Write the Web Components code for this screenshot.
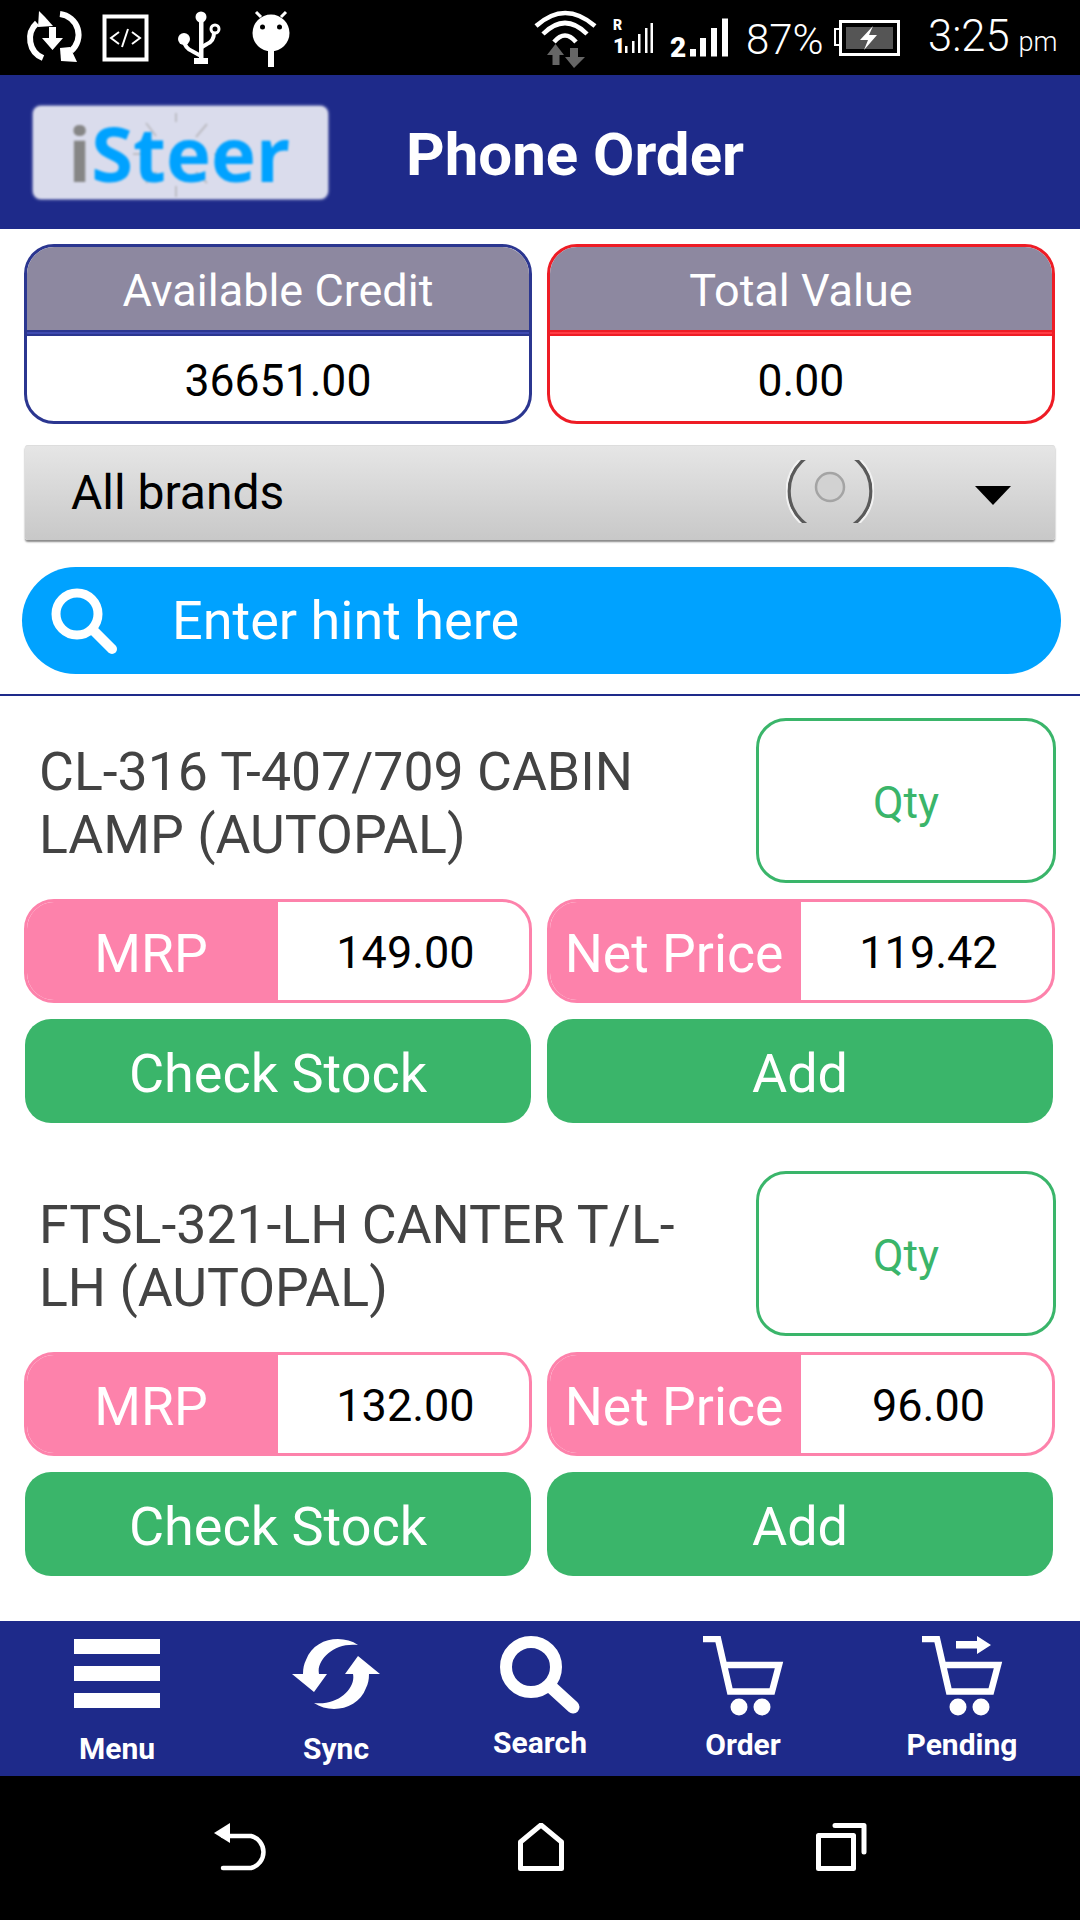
<!DOCTYPE html>
<html><head><meta charset="utf-8"><title>Phone Order</title>
<style>
html,body{margin:0;padding:0;background:#fff;font-family:Roboto,"Liberation Sans",sans-serif}
</style></head><body>
<phone-app></phone-app>
<script>
function def(name, html){
  customElements.define(name, class extends HTMLElement{
    constructor(){super();this.attachShadow({mode:'open'});}
    connectedCallback(){
      this.shadowRoot.innerHTML=typeof html==='function'?html(this):html;
    }
  });
}
const F='Roboto,"Liberation Sans",sans-serif';

def('status-bar',`<style>
:host{display:flex;height:75px;background:#000;color:#fff;align-items:center;font-family:${F};box-sizing:border-box;flex:none}
svg{display:block;flex:none;overflow:visible}
.l{display:flex;align-items:center;margin-left:27px}
.r{display:flex;align-items:center;margin-left:auto;margin-right:25px}
.t{font-weight:300;font-size:42px;line-height:75px;white-space:nowrap;padding-top:3px;box-sizing:border-box;flex:none}
.pm{font-size:27px;font-weight:300;margin-left:9px}
</style>
<div class="l">
<svg width="53" height="54" viewBox="0 0 53 54" fill="none"><path d="M10 12A21 21 0 0 0 16 47" stroke="#fff" stroke-width="6"/><path d="M18 6 L12 0 L11 16 L26 15Z" fill="#fff"/><path d="M33 3A21 21 0 0 1 44 40" stroke="#fff" stroke-width="6"/><path d="M34 50L50 51L43 36L33 37Z" fill="#fff"/><path d="M22 16h7v11h7L25.500 39 15 27h7z" fill="#fff"/></svg>
<svg style="margin-left:22px" width="47" height="48" viewBox="0 0 47 48" fill="none"><rect x="2.500" y="2.500" width="42" height="43" stroke="#fff" stroke-width="4"/><path d="M17 18l-8 6 8 6M30 18l8 6-8 6M26 15l-6 18" stroke="#fff" stroke-width="2"/></svg>
<svg style="margin-left:28px" width="50" height="56" viewBox="0 0 50 56" fill="#fff"><circle cx="24" cy="7" r="5.500"/><rect x="22" y="8" width="4.500" height="42"/><rect x="17" y="48" width="14" height="6"/><circle cx="7" cy="29" r="6"/><path d="M7 31q1 7 8 10l9 5" stroke="#fff" stroke-width="4" fill="none"/><circle cx="38" cy="19" r="4" fill="none" stroke="#fff" stroke-width="3"/><path d="M37 23q0 8-7 11l-5 3" stroke="#fff" stroke-width="4" fill="none"/></svg>
<svg style="margin-left:25px" width="38" height="58" viewBox="0 0 38 58" fill="#fff"><circle cx="19" cy="24" r="18.500"/><path d="M9 8L4 3M29 8l5-5" stroke="#fff" stroke-width="3"/><rect x="16" y="42" width="6" height="16"/><circle cx="10.500" cy="18" r="2.500" fill="#000"/><circle cx="27.500" cy="18" r="2.500" fill="#000"/></svg>
</div>
<div class="r">
<svg width="62" height="62" viewBox="0 0 62 62" fill="none"><path d="M2 19Q31-7 61 19M9 27Q31 5 53 27M20 35Q31 22 42 35" stroke="#fff" stroke-width="4.500"/><path d="M18.500 58V48H13L21.500 37 30 48H25.500V58Z" fill="#666"/><path d="M36 41H44V50H51L40 61 31 50H36Z" fill="#666"/></svg>
<svg style="margin-left:16px" width="41" height="46" viewBox="0 0 41 46" fill="#fff"><text x="1" y="15" font-family="Roboto" font-size="14" font-weight="900">R</text><text x="1" y="38" font-family="Roboto" font-size="21" font-weight="900">1</text><rect x="13" y="31" width="2.500" height="7"/><rect x="20" y="26" width="2.500" height="12"/><rect x="26" y="19" width="2.500" height="19"/><rect x="33" y="13" width="2.500" height="25"/><rect x="38.500" y="8" width="2.500" height="30"/></svg>
<svg style="margin-left:17px" width="58" height="54" viewBox="0 0 58 54" fill="#fff"><text x="0" y="45.500" font-family="Roboto" font-size="28" font-weight="900">2</text><rect x="20" y="38" width="6" height="7.500"/><rect x="30" y="27" width="6" height="18.500"/><rect x="41" y="17" width="6" height="28.500"/><rect x="52" y="7.500" width="6" height="38"/></svg>
<span class="t" style="margin-left:18px;width:75px">87%</span>
<svg style="margin-left:13px" width="66" height="36" viewBox="0 0 66 36" fill="none"><path d="M6 9H1v16h5" stroke="#fff" stroke-width="2"/><rect x="6.500" y="1.500" width="58" height="33" stroke="#fff" stroke-width="3"/><rect x="12" y="7" width="47" height="22" fill="#555"/><path d="M39 6L26 20h8l-4 10 13-15h-8z" fill="#fff"/></svg>
<span class="t" style="margin-left:28px;width:127px;font-size:43.500px">3:25<span class="pm">pm</span></span>
</div>`);

def('app-header',`<style>
:host{display:flex;height:154px;background:#1e2a8a;align-items:center;font-family:${F};flex:none}
.logo{margin-left:33px;width:295px;height:93px;background:#dadcec;border-radius:8px;box-shadow:0 0 3px #dadcec;position:relative;display:flex;align-items:center;filter:blur(1px);flex:none;box-sizing:border-box;padding-left:35px;font:700 76px/93px "Open Sans",sans-serif}
.logo svg{position:absolute;left:0;top:0}
.i{color:#868686;position:relative}.s{color:#00a2ff;position:relative}
h1{margin:0 0 0 78px;padding-top:6px;color:#fff;font:700 60px/1 ${F};white-space:nowrap}
</style>
<div class="logo"><svg width="295" height="93" viewBox="0 0 295 93" stroke="#bdbdc4" stroke-width="2" fill="none"><path d="M143 7V16M143 80V91M100 48H110M181 48H191M113 17L123 30M174 18L163 31M113 77L123 66M174 77L163 66"/></svg><span class="i">i</span><span class="s">Steer</span></div>
<h1><slot></slot></h1>`);

def('info-box',(h)=>{const c=h.getAttribute('color');const m=h.getAttribute('mid');return `<style>
:host{display:block;flex:none;width:508px;height:180px;box-sizing:border-box;border:3px solid ${c};border-radius:30px;overflow:hidden;font-family:${F}}
.h{height:83px;box-sizing:border-box;padding-top:3px;background:#8d88a0;color:#fff;font-size:45px;display:flex;align-items:center;justify-content:center}
.d{height:2px;border-top:2px solid ${c};border-bottom:2px solid ${c};background:${m}}
.v{display:flex;align-items:center;justify-content:center;height:85px;font-size:44.500px;color:#000;padding-top:4px;box-sizing:border-box}
</style><div class="h">${h.getAttribute('label')||''}</div><div class="d"></div><div class="v">${h.getAttribute('value')||''}</div>`});

def('brand-spinner',`<style>
:host{display:flex;align-items:center;box-sizing:border-box;width:1030px;height:95px;margin:21px 0 0 25px;flex:none;border-radius:3px;background:linear-gradient(#e6e6e6,#c8c8c8);box-shadow:0 2px 2px #888,inset 0 1px 0 #ddd;position:relative;font:400 48px/1 ${F};color:#000;padding-left:46px}
.ring{position:absolute;left:761px;top:15px;width:88px;height:63px;overflow:hidden}
.ring svg{position:absolute;left:0;top:-14px}
.tri{position:absolute;left:950px;top:41px;width:0;height:0;border-left:18px solid transparent;border-right:18px solid transparent;border-top:19px solid #000}
</style><slot></slot>
<div class="ring"><svg width="88" height="90" viewBox="0 0 88 90" fill="none"><circle cx="44" cy="45" r="41" stroke="#5a5a5a" stroke-width="3.500"/><circle cx="44" cy="45" r="43.500" stroke="#f2f2f2" stroke-width="2"/><circle cx="44" cy="41" r="14" fill="#d2d2d2" stroke="#a4a4a4" stroke-width="2.500"/></svg></div>
<div class="tri"></div>`);

def('search-bar',`<style>
:host{display:flex;align-items:center;box-sizing:border-box;width:1039px;height:107px;margin:27px 0 0 22px;flex:none;border-radius:54px;background:#00a2ff;color:#fff;font:400 54px/1 ${F};padding-left:29px}
svg{flex:none;margin-right:55px}
.t{padding-top:1px}
</style><svg width="66" height="66" viewBox="0 0 66 66" fill="none"><circle cx="26" cy="26" r="21" stroke="#fff" stroke-width="9"/><path d="M42 42L61 61" stroke="#fff" stroke-width="10" stroke-linecap="round"/></svg><span class="t"><slot></slot></span>`);

def('price-pill',(h)=>`<style>
:host{display:flex;box-sizing:border-box;flex:none;width:508px;height:104px;border:3px solid #fd82ab;border-radius:30px;overflow:hidden;font-family:${F}}
.a{width:251px;background:#fd82ab;color:#fff;font-size:53.500px;display:flex;align-items:center;justify-content:center;white-space:nowrap;flex:none;padding:5px 3px 0 0;box-sizing:border-box}
.b{flex:1;display:flex;align-items:center;justify-content:center;color:#000;font-size:45px;padding:3px 0 0 4px}
</style><div class="a">${h.getAttribute('label')}</div><div class="b">${h.getAttribute('value')}</div>`);

def('action-button',`<style>
:host{display:flex;box-sizing:border-box;flex:none;width:506px;height:104px;background:#3ab56a;border-radius:26px;color:#fff;font:400 54px/1 ${F};align-items:center;justify-content:center;padding-top:6px}
</style><slot></slot>`);

def('product-item',(h)=>`<style>
:host{display:block;box-sizing:border-box;height:453px;padding-top:22px;font-family:${F};flex:none}
.top{display:flex;height:165px;align-items:center;padding:0 24px 0 39px;justify-content:space-between}
.n{width:660px;font-size:53.600px;line-height:63px;color:#434343;margin-top:5px}
.q{width:300px;height:165px;box-sizing:border-box;border:3px solid #3ab56a;border-radius:30px;display:flex;align-items:center;justify-content:center;color:#3ab56a;font-size:44.500px;flex:none;padding-top:4px}
.row{display:flex;gap:15px;margin:16px 0 0 24px}
.row.b{gap:16px;margin-left:25px}
</style>
<div class="top"><div class="n">${h.getAttribute('name')}</div><div class="q">Qty</div></div>
<div class="row"><price-pill label="MRP" value="${h.getAttribute('mrp')}"></price-pill><price-pill label="Net Price" value="${h.getAttribute('net')}"></price-pill></div>
<div class="row b"><action-button>Check Stock</action-button><action-button>Add</action-button></div>`);

def('nav-item',(h)=>`<style>
:host{display:flex;flex-direction:column;align-items:center;color:#fff;font:700 30px/34px ${F};box-sizing:border-box;height:155px;padding-top:${h.getAttribute('top')}px}
.l{margin-top:${h.getAttribute('shift')||0}px;white-space:nowrap}
::slotted(svg){display:block}
</style><slot></slot><div class="l">${h.getAttribute('label')}</div>`);

def('bottom-nav',`<style>
:host{display:grid;grid-template-columns:234px 204px 204px 202px 236px;height:155px;background:#1e2a8a;flex:none}
</style><slot></slot>`);

def('system-nav',`<style>
:host{display:flex;height:144px;background:#000;flex:none;box-sizing:border-box;padding:47px 0 0 214px}
svg{display:block;flex:none}
</style>
<svg width="53" height="48" viewBox="0 0 53 48" fill="none"><path d="M9 13H37A16.500 16.500 0 0 1 37 45H9" stroke="#fff" stroke-width="4.500" stroke-linecap="round"/><path d="M0 10L16 0V20Z" fill="#fff"/></svg>
<svg style="margin-left:251px" width="46" height="48" viewBox="0 0 46 48" fill="none"><path d="M2.500 45.500V19L23 2 43.500 19V45.500Z" stroke="#fff" stroke-width="5" stroke-linejoin="round"/></svg>
<svg style="margin-left:252px" width="51" height="48" viewBox="0 0 51 48" fill="none"><rect x="2.500" y="12.500" width="35" height="33" stroke="#fff" stroke-width="5" stroke-linejoin="round"/><path d="M19 2.500H48V29" stroke="#fff" stroke-width="5" stroke-linecap="round" stroke-linejoin="round"/></svg>`);

const cart=(arrow)=>`<svg width="81" height="80" viewBox="0 0 81 80" fill="none"><path d="M0 3H15L27 55.500H69L76 29H21" stroke="#fff" stroke-width="6.500"/><circle cx="36" cy="71" r="8.500" fill="#fff"/><circle cx="59" cy="71" r="8.500" fill="#fff"/>${arrow?'<path d="M34 5H55V0L69 9 55 18V12.500H34Z" fill="#fff"/>':''}</svg>`;

def('phone-app',`<style>
:host{display:flex;flex-direction:column;width:1080px;height:1920px;background:#fff;overflow:hidden}
.boxes{display:flex;gap:15px;margin:15px 0 0 24px;flex:none}
.line{height:2px;background:#1e2a8a;margin-top:20px;flex:none}
.list{flex:1;min-height:0}
</style>
<status-bar></status-bar>
<app-header>Phone Order</app-header>
<div class="boxes"><info-box color="#2b3690" mid="#3f4ab0" label="Available Credit" value="36651.00"></info-box><info-box color="#ee1c25" mid="#ff3b44" label="Total Value" value="0.00"></info-box></div>
<brand-spinner>All brands</brand-spinner>
<search-bar>Enter hint here</search-bar>
<div class="line"></div>
<div class="list">
<product-item name="CL-316 T-407/709 CABIN LAMP (AUTOPAL)" mrp="149.00" net="119.42"></product-item>
<product-item name="FTSL-321-LH CANTER T/L-LH (AUTOPAL)" mrp="132.00" net="96.00"></product-item>
</div>
<bottom-nav>
<nav-item label="Menu" top="18" shift="24"><svg width="86" height="69" viewBox="0 0 86 69" fill="#fff"><rect width="86" height="15"/><rect y="27" width="86" height="15"/><rect y="54" width="86" height="15"/></svg></nav-item>
<nav-item label="Sync" top="17" shift="22"><svg width="90" height="72" viewBox="0 0 88 72" fill="#fff"><path d="M66 7C50-4 22 0 14 22 12 26 11 30 11 36H0L22 54 35 36H27C24 22 42 4 66 7Z"/><path d="M22 65C38 76 66 72 74 50 76 46 77 42 77 36H88L66 18 53 36H61C64 50 46 68 22 65Z"/></svg></nav-item>
<nav-item label="Search" top="15" shift="12"><svg width="80" height="78" viewBox="0 0 80 78" fill="none"><circle cx="31" cy="31" r="25" stroke="#fff" stroke-width="12"/><path d="M50 50L73 71" stroke="#fff" stroke-width="13" stroke-linecap="round"/></svg></nav-item>
<nav-item label="Order" top="15" shift="12">${cart(false)}</nav-item>
<nav-item label="Pending" top="15" shift="12">${cart(true)}</nav-item>
</bottom-nav>
<system-nav></system-nav>`);
</script>
</body></html>
